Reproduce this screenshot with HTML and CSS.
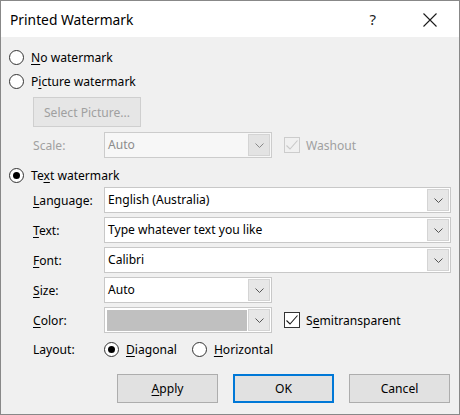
FILE: index.html
```html
<!DOCTYPE html>
<html>
<head>
<meta charset="utf-8">
<link rel="stylesheet" href="styles.css">
</head>
<body>
<div class="window">
  <div class="titlebar">
    <span class="title">Printed Watermark</span>
    <span class="help">?</span>
    <span class="close"><svg width="14" height="14" viewBox="0 0 14 14"><path d="M0.5 0.5 L13.5 13.5 M13.5 0.5 L0.5 13.5" stroke="#1a1a1a" stroke-width="1.1" fill="none"/></svg></span>
  </div>
  <div class="body">
    <div class="radio-row"><span class="radio"></span><span><u>N</u>o watermark</span></div>
    <div class="radio-row"><span class="radio"></span><span>P<u>i</u>cture watermark</span></div>
    <div class="indent"><div class="btn btn-select disabled">Select Picture...</div></div>
    <div class="field-row indent">
      <span class="lbl disabled">Scale:</span>
      <div class="combo small dis">
        <span class="val">Auto</span>
        <span class="arrow"><svg width="9" height="5" viewBox="0 0 9 5"><path d="M0.5 0.5 L4.5 4.5 L8.5 0.5" stroke="#888" fill="none"/></svg></span>
      </div>
      <span class="check-wrap disabled">
        <span class="check dis"><svg width="14" height="14" viewBox="0 0 14 14"><path d="M1.5 7.5 L5 11 L12.5 2.5" stroke="#c8c8c8" stroke-width="1.1" fill="none"/></svg></span>
        <span>Washout</span>
      </span>
    </div>
    <div class="radio-row r-text"><span class="radio on"></span><span>Te<u>x</u>t watermark</span></div>
    <div class="field-row indent">
      <span class="lbl"><u>L</u>anguage:</span>
      <div class="combo">
        <span class="val">English (Australia)</span>
        <span class="arrow"><svg width="9" height="5" viewBox="0 0 9 5"><path d="M0.5 0.5 L4.5 4.5 L8.5 0.5" stroke="#555" fill="none"/></svg></span>
      </div>
    </div>
    <div class="field-row indent gap">
      <span class="lbl"><u>T</u>ext:</span>
      <div class="combo">
        <span class="val">Type whatever text you like</span>
        <span class="arrow"><svg width="9" height="5" viewBox="0 0 9 5"><path d="M0.5 0.5 L4.5 4.5 L8.5 0.5" stroke="#555" fill="none"/></svg></span>
      </div>
    </div>
    <div class="field-row indent gap">
      <span class="lbl"><u>F</u>ont:</span>
      <div class="combo">
        <span class="val">Calibri</span>
        <span class="arrow"><svg width="9" height="5" viewBox="0 0 9 5"><path d="M0.5 0.5 L4.5 4.5 L8.5 0.5" stroke="#555" fill="none"/></svg></span>
      </div>
    </div>
    <div class="field-row indent gap">
      <span class="lbl"><u>S</u>ize:</span>
      <div class="combo small">
        <span class="val">Auto</span>
        <span class="arrow"><svg width="9" height="5" viewBox="0 0 9 5"><path d="M0.5 0.5 L4.5 4.5 L8.5 0.5" stroke="#555" fill="none"/></svg></span>
      </div>
    </div>
    <div class="field-row indent gap">
      <span class="lbl"><u>C</u>olor:</span>
      <div class="combo small">
        <span class="swatch"></span>
        <span class="arrow"><svg width="9" height="5" viewBox="0 0 9 5"><path d="M0.5 0.5 L4.5 4.5 L8.5 0.5" stroke="#555" fill="none"/></svg></span>
      </div>
      <span class="check-wrap">
        <span class="check"><svg width="14" height="14" viewBox="0 0 14 14"><path d="M1.5 7.5 L5 11 L12.5 2.5" stroke="#1a1a1a" stroke-width="1.1" fill="none"/></svg></span>
        <span>S<u>e</u>mitransparent</span>
      </span>
    </div>
    <div class="field-row indent layout-row">
      <span class="lbl">Layout:</span>
      <span class="opt"><span class="radio on"></span><span><u>D</u>iagonal</span></span>
      <span class="opt opt2"><span class="radio"></span><span><u>H</u>orizontal</span></span>
    </div>
    <div class="buttons">
      <div class="btn"><u>A</u>pply</div>
      <div class="btn default">OK</div>
      <div class="btn">Cancel</div>
    </div>
  </div>
</div>
</body>
</html>
```

FILE: styles.css
```css
html, body {
  margin: 0;
  padding: 0;
  background: #f0f0f0;
}
.window {
  width: 460px;
  height: 415px;
  box-sizing: border-box;
  border: 1px solid #888888;
  background: #f0f0f0;
  font-family: "Noto Sans", "Open Sans", sans-serif;
  font-size: 12.1px;
  color: #000;
}
.titlebar {
  height: 36px;
  background: #ffffff;
  display: flex;
  align-items: center;
  position: relative;
}
.title {
  margin-left: 9px;
  font-size: 13.8px;
  color: #000;
  flex: 1;
}
.help {
  font-size: 15px;
  color: #222;
  margin-right: 47px;
}
.close {
  display: flex;
  margin-right: 22px;
  margin-top: 1px;
}
.body {
  padding: 8px 8px 0 8px;
}
u {
  text-decoration: underline;
  text-underline-offset: 2px;
  text-decoration-thickness: 1px;
}
.radio-row {
  height: 24px;
  display: flex;
  align-items: center;
}
.radio {
  width: 15px;
  height: 15px;
  box-sizing: border-box;
  border: 1px solid #333;
  border-radius: 50%;
  background: #fff;
  margin-right: 7px;
  flex: none;
  display: flex;
  align-items: center;
  justify-content: center;
}
.radio.on::after {
  content: "";
  width: 7px;
  height: 7px;
  border-radius: 50%;
  background: #000;
}
.indent {
  margin-left: 24px;
}
.btn {
  height: 29px;
  width: 101px;
  box-sizing: border-box;
  border: 1px solid #adadad;
  background: #e1e1e1;
  display: flex;
  align-items: center;
  justify-content: center;
}
.btn-select {
  margin-top: 4px;
  width: 108px;
  height: 30px;
  border-color: #cfcfcf;
  background: #e6e6e6;
}
.disabled {
  color: #a0a0a0;
}
.field-row {
  height: 26px;
  display: flex;
  align-items: center;
}
.field-row.gap {
  margin-top: 4px;
}
.field-row:nth-child(4) {
  margin-top: 5px;
}
.lbl {
  width: 71px;
  flex: none;
}
.combo {
  flex: 1;
  height: 26px;
  box-sizing: border-box;
  border: 1px solid #c8c8c8;
  background: #fff;
  display: flex;
  align-items: stretch;
}
.combo.small {
  flex: none;
  width: 168px;
}
.combo.dis {
  background: #f7f7f7;
  border-color: #cccccc;
  color: #8c8c8c;
}
.combo .val {
  flex: 1;
  padding-left: 3px;
  display: flex;
  align-items: center;
  margin-top: -1px;
}
.combo .swatch {
  flex: 1;
  margin: 2px 0 1px 2px;
  background: #c0c0c0;
}
.combo .arrow {
  width: 22px;
  margin: 1px;
  box-sizing: border-box;
  border: 1px solid #d4d4d4;
  background: #e7e7e7;
  display: flex;
  align-items: center;
  justify-content: center;
}
.combo.dis .arrow {
  background: #e3e3e3;
}
.check-wrap {
  display: flex;
  align-items: center;
  margin-left: 12px;
}
.check {
  width: 16px;
  height: 16px;
  box-sizing: border-box;
  border: 1px solid #333;
  background: #fff;
  margin-right: 6px;
  display: flex;
  align-items: center;
  justify-content: center;
}
.check.dis {
  border-color: #cccccc;
  background: #f0f0f0;
}
.r-text {
  margin-top: 5px;
}
.layout-row {
  height: 24px;
  margin-top: 4px;
}
.opt {
  display: flex;
  align-items: center;
}
.opt .radio {
  margin-right: 7px;
}
.opt2 {
  margin-left: 15px;
}
.buttons {
  margin-top: 13px;
  display: flex;
  justify-content: flex-end;
  gap: 15px;
  padding-right: 1px;
}
.btn.default {
  border: 2px solid #0078d7;
}
```
